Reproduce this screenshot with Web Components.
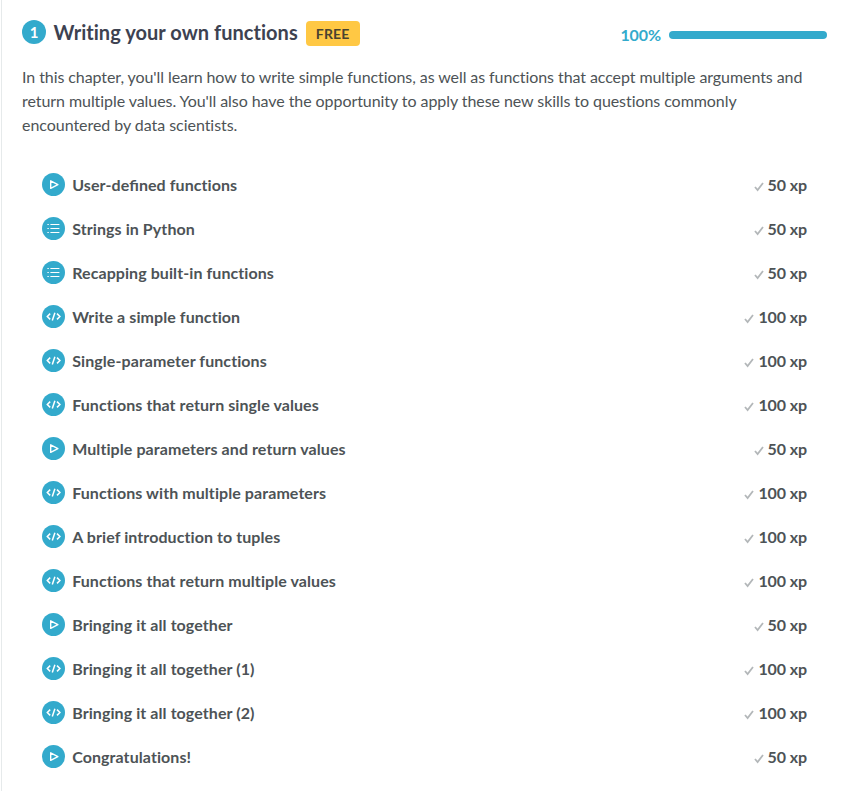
<!DOCTYPE html>
<html lang="en"><head><meta charset="utf-8"><title>Writing your own functions</title>
<style>body{margin:0;background:#fff;font-family:Lato,sans-serif;font-variant-ligatures:none;color:#4d5356}</style></head>
<body><course-chapter></course-chapter>
<script>
class StatusIcon extends HTMLElement{
 connectedCallback(){
  const glyphs={
   video:'<path d="M8.7 7.8v7.6l7.2-3.8z" fill="none" stroke="#fff" stroke-width="1.4" stroke-linejoin="round"/>',
   list:'<path d="M5.4 7.5h1.4M8.4 7.5h9M5.4 11.5h1.4M8.4 11.5h9M5.4 15.5h1.4M8.4 15.5h9" stroke="#fff" stroke-width="1.2"/>',
   code:'<path d="M8.2 8.6L5.3 11.5l2.9 2.9M15 8.6l2.9 2.9-2.9 2.9M12.9 7.8l-2.6 7.6" fill="none" stroke="#fff" stroke-width="1.5"/>'
  };
  this.attachShadow({mode:'open'}).innerHTML=`<style>:host{display:block;width:23px;height:23px;flex:none}svg{display:block}</style><svg width="23" height="23" viewBox="0 0 23 23"><circle cx="11.5" cy="11.5" r="11.5" fill="#33aacc"/>${glyphs[this.getAttribute('kind')]}</svg>`;
 }
}
customElements.define('status-icon',StatusIcon);
class ExerciseRow extends HTMLElement{
 connectedCallback(){
  this.attachShadow({mode:'open'}).innerHTML=`<style>:host{display:flex;align-items:center;height:44px;font-weight:700;font-size:16px;line-height:24px}.name{margin-left:7.2px;flex:1;letter-spacing:.08px}::slotted(.fi){font-variant-ligatures:normal;letter-spacing:0}.xp{display:flex;align-items:center;gap:4px;letter-spacing:-.1px}svg{display:block;margin-top:3px}status-icon{margin-top:-1px}</style><status-icon kind="${this.getAttribute('kind')}"></status-icon><span class="name"><slot></slot></span><span class="xp"><svg width="10" height="10" viewBox="0 0 10 10"><path d="M1 5l2.6 3L9 1" fill="none" stroke="#b3b7b9" stroke-width="1.8"/></svg><span>${this.getAttribute('xp')} xp</span></span>`;
 }
}
customElements.define('exercise-row',ExerciseRow);
class CourseChapter extends HTMLElement{
 connectedCallback(){
  const rows=[['video',50,'User-de<span class="fi">fi</span>ned functions'],['list',50,'Strings in Python'],['list',50,'Recapping built-in functions'],['code',100,'Write a simple function'],['code',100,'Single-parameter functions'],['code',100,'Functions that return single values'],['video',50,'Multiple parameters and return values'],['code',100,'Functions with multiple parameters'],['code',100,'A brief introduction to tuples'],['code',100,'Functions that return multiple values'],['video',50,'Bringing it all together'],['code',100,'Bringing it all together (1)'],['code',100,'Bringing it all together (2)'],['video',50,'Congratulations!']];
  this.attachShadow({mode:'open'}).innerHTML=`<style>
:host{display:block;box-sizing:border-box;height:791px;margin-left:1px;border-left:1px solid #e6eaeb;padding:20px 19px 0 20px}
header{display:flex;align-items:center;height:24px}
.num{width:24px;height:24px;border-radius:50%;background:#3ac;color:#fff;font-weight:700;font-size:15px;line-height:24px;text-align:center}
h4{margin:0 0 0 7.5px;font-size:20px;line-height:24px;color:#3d4251;letter-spacing:.04px}
.free{margin:3px 0 0 8px;background:#ffc844;color:#4a4330;font-size:14px;font-weight:700;line-height:25px;padding:0 10px;border-radius:4px;letter-spacing:.2px}
.progress{margin-left:auto;display:flex;align-items:center;gap:8px;color:#3ac;font-weight:700;font-size:16px;line-height:20px;padding-top:6px;letter-spacing:-.1px}
.bar{width:158px;height:8px;border-radius:4px;background:#3ac}
p{margin:21px 0 0;font-size:16px;line-height:24px;letter-spacing:-.08px}
.list{margin:26px 20px 0 20px}
</style><header><span class="num">1</span><h4>Writing your own functions</h4><span class="free">FREE</span><span class="progress">100%<span class="bar"></span></span></header>
<p>In this chapter, you'll learn how to write simple functions, as well as functions that accept multiple arguments and<br><span style="letter-spacing:-.065px">return multiple values. You'll also have the opportunity to apply these new skills to questions commonly</span><br><span style="letter-spacing:-.045px">encountered by data scientists.</span></p>
<div class="list">${rows.map(([k,x,t])=>`<exercise-row kind="${k}" xp="${x}">${t}</exercise-row>`).join('')}</div>`;
 }
}
customElements.define('course-chapter',CourseChapter);
</script></body></html>
